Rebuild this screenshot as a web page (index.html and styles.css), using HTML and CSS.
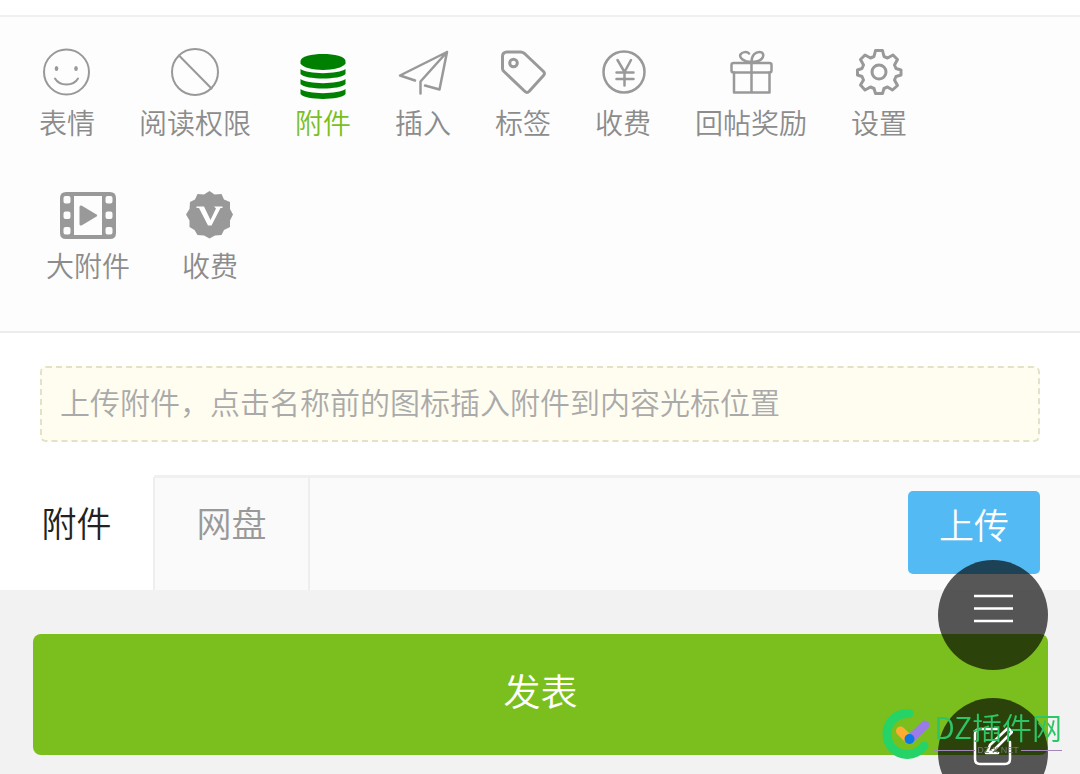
FILE: index.html
```
<!DOCTYPE html>
<html lang="zh-CN">
<head>
<meta charset="utf-8">
<meta name="viewport" content="width=device-width, initial-scale=1">
<title>发表</title>
<link rel="stylesheet" href="styles.css">
</head>
<body>
<main class="page">
  <nav class="toolbar">
    <div class="tool-row">
      <button type="button" class="tool">
        <svg class="icon" viewBox="0 0 48 48"><circle cx="23.500" cy="24" r="22.500"/><path d="M12 30.500c4.500 8 18.500 8 23 0"/><ellipse class="solid" cx="13.500" cy="20.500" rx="1.800" ry="2.600"/><ellipse class="solid" cx="33" cy="20.500" rx="1.800" ry="2.600"/></svg>
        <span>表情</span>
      </button>
      <button type="button" class="tool">
        <svg class="icon" viewBox="0 0 48 48"><circle cx="24" cy="24" r="23"/><path d="M8 7.500l32.500 33"/></svg>
        <span>阅读权限</span>
      </button>
      <button type="button" class="tool tool-active">
        <svg class="icon" viewBox="0 0 48 48"><g class="solid"><path d="M1.500 13v2.500c5 8.500 40 8.500 45 0V13c0-9.500-45-9.500-45 0z"/><path d="M1.500 21c7 5.500 38 5.500 45 0v5c-5 6-40 6-45 0z"/><path d="M1.500 31c7 5.500 38 5.500 45 0v5c-5 6-40 6-45 0z"/><path d="M1.500 41c7 5.500 38 5.500 45 0v5c-5 6.500-40 6.500-45 0z"/></g></svg>
        <span>附件</span>
      </button>
      <button type="button" class="tool">
        <svg class="icon icon-medium" viewBox="0 0 48 48"><path d="M16 32.500L1 27.500 48 4 40.500 41.500 26 37.500M48 4L21.500 33.500v12"/></svg>
        <span>插入</span>
      </button>
      <button type="button" class="tool">
        <svg class="icon icon-heavy" viewBox="0 0 48 48"><path d="M3.500 8.500q0-4 4-4.500h14q2 0 4 1.500l19 18q2 2 0 4L30 43.500q-2 2-4 0L5 23.500q-1.500-1.500-1.500-3z"/><circle cx="14.500" cy="15" r="3.800"/></svg>
        <span>标签</span>
      </button>
      <button type="button" class="tool">
        <svg class="icon icon-medium" viewBox="0 0 48 48"><circle cx="25" cy="24" r="20.500"/><path d="M18.500 12l7 12 6.500-12M25.500 24v13.500M17.500 24.500h17M17.500 31h17"/></svg>
        <span>收费</span>
      </button>
      <button type="button" class="tool">
        <svg class="icon icon-medium" viewBox="0 0 48 48"><rect x="4.500" y="15" width="40" height="9.500" rx="2"/><path d="M7 24.500v20h35.500v-20M24.500 44.500V14C16 14 12 9 13.500 6.500S20 3 22 5.500M24.500 14c0-7 4-10 8-10 4 0 5 4 2 7-2 2-5 3-10 3"/></svg>
        <span>回帖奖励</span>
      </button>
      <button type="button" class="tool">
        <svg class="icon icon-heavy" viewBox="0 0 48 48"><circle cx="24" cy="24" r="7"/><path d="M20.500 2.500h7l1.500 6 3.500 1.500 5.500-3 4.500 4.500-3 5.500 1.500 3.500 5 1.500v5l-5 1.500-1.500 3.500 3 5.500-5 4.500-5-3-3.500 1.500-1.500 5h-7l-1.500-5-3.500-1.500-5.500 3L5.500 37l3-5L7 28.500 2.500 27v-5L7 20.500 8.500 17l-3-5.500L10 7l5.500 3L19 8.500z"/></svg>
        <span>设置</span>
      </button>
    </div>
    <div class="tool-row tool-row-extra">
      <button type="button" class="tool">
        <svg class="icon icon-film" viewBox="0 0 56 48"><path class="solid" fill-rule="evenodd" d="M6 1h44q6 0 6 6v35q0 6-6 6H6q-6 0-6-6V7q0-6 6-6zM14 5v39h28V5zM5.500 5q-2 0-2 2v3.500q0 2 2 2h3q2 0 2-2V7q0-2-2-2zM5.500 20.500q-2 0-2 2V26q0 2 2 2h3q2 0 2-2v-3.500q0-2-2-2zM5.500 36q-2 0-2 2v3.500q0 2 2 2h3q2 0 2-2V38q0-2-2-2zM47.500 5q-2 0-2 2v3.500q0 2 2 2h3q2 0 2-2V7q0-2-2-2zM47.500 20.500q-2 0-2 2V26q0 2 2 2h3q2 0 2-2v-3.500q0-2-2-2zM47.500 36q-2 0-2 2v3.500q0 2 2 2h3q2 0 2-2V38q0-2-2-2z"/><path class="solid" d="M19.500 16q0-2 2-1.500l15 9q1.500 1 0 2l-15 9q-2 .5-2-1.500z"/></svg>
        <span>大附件</span>
      </button>
      <button type="button" class="tool">
        <svg class="icon" viewBox="0 0 48 48"><path class="solid" d="M23.500 0l5 3.500 7-.5L38 8.500l6 2.500v7l3 5.500-3 6V36l-6 3-2.500 5-6.500.5-5.500 3-5.500-3-6.500-.5-3-5-5-3v-6.500l-3.500-6 3.500-5.500.5-7L9 8.500 11.500 3l6.500.5z"/><path class="cutout" d="M10.500 15.500H18l6.500 13.500 5.500-11.500-2-2h8.500v1.500h-2L25.500 34.500h-3.500L13 17h-2.500z"/></svg>
        <span>收费</span>
      </button>
    </div>
  </nav>

  <section class="attachments">
    <p class="hint">上传附件，点击名称前的图标插入附件到内容光标位置</p>
    <div class="tabs">
      <button type="button" class="tab tab-current">附件</button>
      <button type="button" class="tab">网盘</button>
      <div class="tabs-rest"><button type="button" class="upload">上传</button></div>
    </div>
  </section>

  <footer class="submit-area">
    <button type="button" class="submit">发表</button>
  </footer>
</main>

<aside class="floating">
  <button type="button" class="fab" aria-label="菜单">
    <svg class="fab-icon fab-menu" viewBox="0 0 40 40"><path d="M1 7h39M1 19.500h39M1 32h39"/></svg>
  </button>
  <button type="button" class="fab" aria-label="编辑">
    <svg class="fab-icon" viewBox="0 0 40 40"><path d="M24 2H7Q2 2 2 7v25q0 5 5 5h25q5 0 5-5V15M14 26l3-8L35 1l4 4-17 17zM13 26h12"/></svg>
  </button>
</aside>

<div class="brand">
  <svg class="brand-mark" viewBox="0 0 52 52"><path class="ring" d="M27 5.500A20.500 20.500 0 1 0 42 38"/><path class="orange" d="M18.500 23l7 7"/><path class="purple" d="M43 17L28 31"/><circle class="dot" cx="27.500" cy="31" r="5"/></svg>
  <div class="brand-text">
    <span class="brand-name">DZ插件网</span>
    <span class="brand-site">DZ-X.NET</span>
  </div>
</div>
</body>
</html>
```
FILE: styles.css
```
* { box-sizing: border-box; }

body {
  margin: 0;
  background: #f2f2f2;
  color: #999;
  font-family: "Noto Sans CJK SC", sans-serif;
  font-weight: 350;
}

button {
  margin: 0;
  padding: 0;
  border: 0;
  background: none;
  color: inherit;
  font: inherit;
  cursor: pointer;
}

.page {
  padding-top: 15px;
  background: #fff;
}

.toolbar {
  display: flex;
  flex-direction: column;
  gap: 47px;
  padding: 31px 39px 44px;
  border-top: 2px solid #f0f0f0;
  border-bottom: 2px solid #ececec;
  background: #fdfdfd;
}

.tool-row {
  display: flex;
  flex-wrap: wrap;
  gap: 44px;
}

.tool-row-extra {
  gap: 52px;
  padding-left: 7px;
}

.tool {
  display: flex;
  flex-direction: column;
  align-items: center;
  gap: 4px;
  color: #8c8c8c;
  font-size: 28px;
  line-height: 44px;
}

.tool-active { color: #7abf1e; }
.tool-active .icon { color: #008000; }

.icon {
  display: block;
  width: 48px;
  height: 48px;
  color: #999;
  fill: none;
  stroke: currentColor;
  stroke-width: 2;
  stroke-linecap: round;
  stroke-linejoin: round;
  overflow: visible;
}

.icon-film { width: 56px; }
.icon-medium { stroke-width: 2.500; }
.icon-heavy { stroke-width: 3; }
.icon .solid { fill: currentColor; stroke: none; }
.icon .cutout { fill: #fff; stroke: none; }

.hint {
  margin: 33px 40px;
  padding: 12px 18px 18px;
  border: 2px dashed #e2e2c8;
  border-radius: 6px;
  background: #fffdf0;
  color: #aaa;
  font-size: 30px;
  line-height: 42px;
}

.tabs {
  display: flex;
  background: #fafafa;
}

.tab {
  width: 155px;
  padding: 0 0 25px;
  border-top: 3px solid #f0f0f0;
  border-right: 2px solid #eee;
  font-size: 35px;
  line-height: 87px;
}

.tab-current {
  border-top-color: #fff;
  background: #fff;
  color: #222;
}

.tabs-rest {
  display: flex;
  flex: 1;
  align-items: center;
  justify-content: flex-end;
  padding: 0 40px 4px 0;
  border-top: 3px solid #f0f0f0;
}

.upload {
  width: 132px;
  padding-bottom: 17px;
  border-radius: 5px;
  background: #54baf4;
  color: #fff;
  font-size: 35px;
  line-height: 66px;
}

.submit-area {
  padding: 44px 32px 19px 33px;
  background: #f2f2f2;
}

.submit {
  display: block;
  width: 100%;
  padding-bottom: 9px;
  border-radius: 8px;
  background: #7bbf1e;
  color: #fff;
  font-size: 37px;
  line-height: 112px;
}

.floating {
  position: fixed;
  top: 560px;
  right: 32px;
  display: grid;
  gap: 28px;
}

.fab {
  display: grid;
  place-items: center;
  width: 110px;
  height: 110px;
  padding-bottom: 12px;
  border-radius: 50%;
  background: rgba(0, 0, 0, 0.65);
}

.fab-icon {
  width: 40px;
  height: 40px;
  fill: none;
  stroke: #fff;
  stroke-width: 2.500;
  stroke-linecap: round;
  stroke-linejoin: round;
}

.fab-menu { stroke-linecap: butt; }

.brand {
  position: fixed;
  top: 708px;
  right: 18px;
  display: flex;
  pointer-events: none;
}

.brand-mark {
  width: 52px;
  height: 52px;
  fill: none;
  stroke-width: 9;
  stroke-linecap: round;
}

.ring { stroke: #25d366; }
.orange { stroke: #ffac33; }
.purple { stroke: #9b7be8; }
.dot { fill: #0b78e3; }

.brand-text {
  display: flex;
  flex-direction: column;
  gap: 2px;
}

.brand-name {
  color: #2dc565;
  font-size: 30px;
  line-height: 36px;
}

.brand-site {
  display: flex;
  align-items: center;
  gap: 2px;
  color: #777;
  font-family: "Liberation Sans", sans-serif;
  font-size: 9px;
  line-height: 9px;
}

.brand-site::before,
.brand-site::after {
  content: "";
  flex: 1;
  height: 1px;
  background: #a087b8;
}
```
